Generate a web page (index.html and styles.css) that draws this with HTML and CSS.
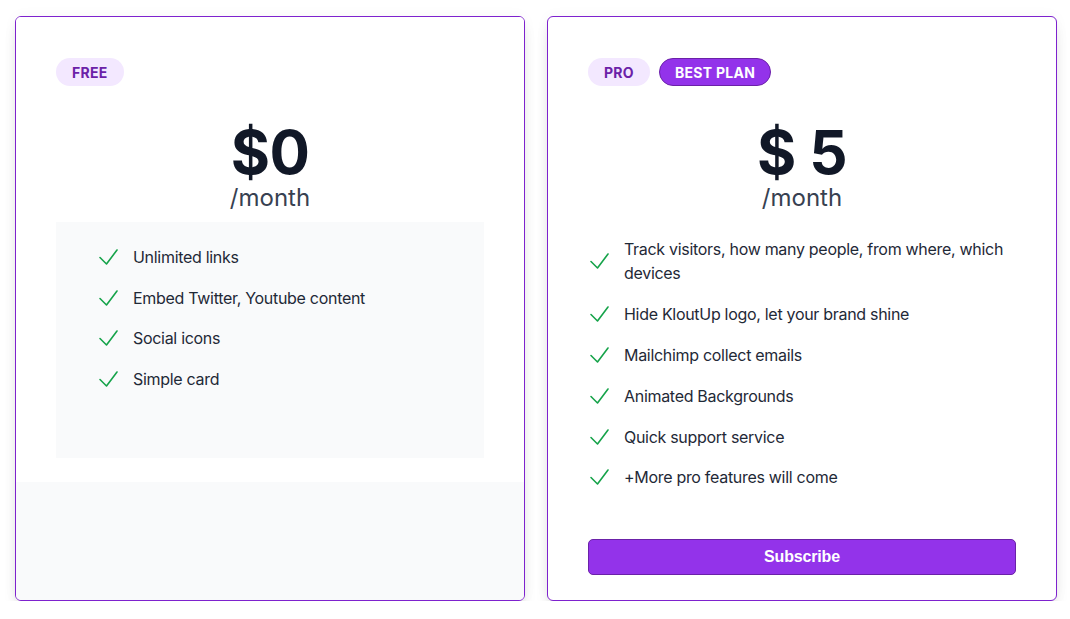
FILE: index.html
```html
<!DOCTYPE html>
<html lang="en">
<head>
<meta charset="utf-8">
<title>Pricing</title>
<link rel="stylesheet" href="styles.css">
</head>
<body>
<main class="plans">
  <section class="card">
    <div class="card-top">
      <div class="badges">
        <span class="badge">Free</span>
      </div>
      <div class="price">
        <span class="amount">$0</span>
        <span class="period">/month</span>
      </div>
      <ul class="features features-boxed">
        <li><svg class="check" viewBox="0 0 24 24"><path d="M3 12.5L9.5 19L20 5"/></svg><span>Unlimited links</span></li>
        <li><svg class="check" viewBox="0 0 24 24"><path d="M3 12.5L9.5 19L20 5"/></svg><span>Embed Twitter, Youtube content</span></li>
        <li><svg class="check" viewBox="0 0 24 24"><path d="M3 12.5L9.5 19L20 5"/></svg><span>Social icons</span></li>
        <li><svg class="check" viewBox="0 0 24 24"><path d="M3 12.5L9.5 19L20 5"/></svg><span>Simple card</span></li>
      </ul>
    </div>
    <div class="card-bottom"></div>
  </section>

  <section class="card card-pro">
    <div class="badges">
      <span class="badge">Pro</span>
      <span class="badge badge-best">Best plan</span>
    </div>
    <div class="price">
      <span class="amount">$ 5</span>
      <span class="period">/month</span>
    </div>
    <ul class="features features-pro">
      <li><svg class="check" viewBox="0 0 24 24"><path d="M3 12.5L9.5 19L20 5"/></svg><span>Track visitors, how many people, from where, which devices</span></li>
      <li><svg class="check" viewBox="0 0 24 24"><path d="M3 12.5L9.5 19L20 5"/></svg><span>Hide KloutUp logo, let your brand shine</span></li>
      <li><svg class="check" viewBox="0 0 24 24"><path d="M3 12.5L9.5 19L20 5"/></svg><span>Mailchimp collect emails</span></li>
      <li><svg class="check" viewBox="0 0 24 24"><path d="M3 12.5L9.5 19L20 5"/></svg><span>Animated Backgrounds</span></li>
      <li><svg class="check" viewBox="0 0 24 24"><path d="M3 12.5L9.5 19L20 5"/></svg><span>Quick support service</span></li>
      <li><svg class="check" viewBox="0 0 24 24"><path d="M3 12.5L9.5 19L20 5"/></svg><span>+More pro features will come</span></li>
    </ul>
    <button class="subscribe" type="button">Subscribe</button>
  </section>
</main>
</body>
</html>
```

FILE: styles.css
```css
* {
  box-sizing: border-box;
}

html, body {
  margin: 0;
  padding: 0;
  background: #ffffff;
}

body {
  font-family: Inter, "Noto Sans", sans-serif;
  color: #111827;
}

.plans {
  display: grid;
  grid-template-columns: 510px 510px;
  column-gap: 22px;
  padding: 16px 0 0 15px;
}

.card {
  display: flex;
  flex-direction: column;
  border: 1px solid #7e22ce;
  border-radius: 6px;
  overflow: hidden;
  background: #ffffff;
  box-shadow: 0 10px 15px -3px rgba(0, 0, 0, 0.1), 0 4px 6px -2px rgba(0, 0, 0, 0.05), 0 0 14px rgba(0, 0, 0, 0.04);
}

.card-top {
  background: #ffffff;
  padding: 41px 40px 24px;
}

.card-bottom {
  flex: 1;
  background: #f9fafb;
}

.card-pro {
  padding: 41px 40px 25px;
}

.badges {
  display: flex;
  gap: 9px;
}

.badge {
  display: inline-flex;
  align-items: center;
  height: 28px;
  padding: 0 16px;
  border-radius: 999px;
  background: #f3e8ff;
  color: #6b21a8;
  font-size: 14px;
  font-weight: 700;
  letter-spacing: 0.02em;
  text-transform: uppercase;
}

.badge-best {
  background: #9333ea;
  color: #ffffff;
  border: 1px solid #6b21a8;
  padding: 0 15px;
}

.price {
  display: flex;
  flex-direction: column;
  align-items: center;
  margin-top: 38px;
}

.amount {
  font-size: 60px;
  line-height: 56px;
  font-weight: 700;
  color: #111827;
  letter-spacing: -0.01em;
}

.period {
  margin-top: 2px;
  font-size: 24px;
  line-height: 32px;
  color: #374151;
}

.features {
  list-style: none;
  margin: 0;
  display: flex;
  flex-direction: column;
  gap: 16.6px;
}

.features li {
  display: flex;
  align-items: center;
  gap: 12px;
  font-size: 16px;
  line-height: 24px;
  letter-spacing: -0.3px;
  color: #1f2937;
}

.features-boxed {
  margin-top: 8px;
  height: 236px;
  padding: 23px 40px 0 41px;
  background: #f9fafb;
}

.features-pro {
  margin-top: 23px;
  padding: 0;
  gap: 16.9px;
}

.check {
  flex: none;
  width: 24px;
  height: 24px;
  fill: none;
  stroke: #16a34a;
  stroke-width: 1.6;
  stroke-linecap: round;
  stroke-linejoin: round;
}

.subscribe {
  margin-top: 50px;
  height: 36px;
  width: 100%;
  border: 1px solid #6b21a8;
  border-radius: 5px;
  background: #9333ea;
  color: #ffffff;
  font-family: "Liberation Sans", Arial, sans-serif;
  font-size: 16px;
  font-weight: 700;
  letter-spacing: -0.01em;
  cursor: pointer;
}
```
